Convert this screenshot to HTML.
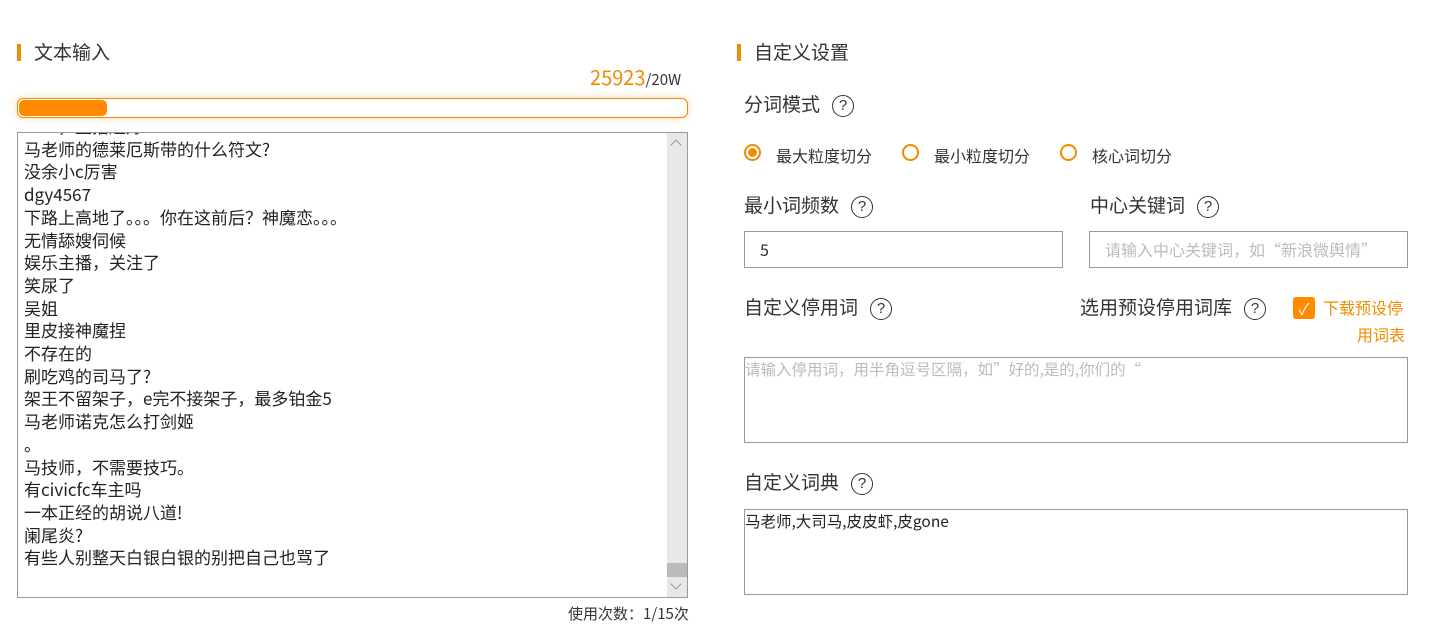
<!DOCTYPE html>
<html><head><meta charset="utf-8"><style>
*{margin:0;padding:0;box-sizing:border-box}
body{width:1430px;height:635px;background:#fff;font-family:"Noto Sans CJK SC","Liberation Sans",sans-serif;color:#333;position:relative;overflow:hidden}
.a{position:absolute;white-space:nowrap}
.bar{position:absolute;width:4px;height:17px;background:#f08c00}
.h{font-size:19px;color:#333;line-height:26px}
.q{display:inline-block;width:22px;height:22px;border:1.5px solid #333;border-radius:50%;font-size:15px;line-height:19px;text-align:center;vertical-align:middle;margin-left:12px;font-family:"Liberation Sans",sans-serif}
.lab{font-size:19px;color:#333;line-height:26px}
.inp{position:absolute;border:1px solid #999;background:#fff}
.radio{position:absolute;width:17px;height:17px;border:2px solid #f08c00;border-radius:50%}
.rl{font-size:16px;color:#333;line-height:20px}
.ta{position:absolute;left:17px;top:132px;width:671px;height:466px;border:1px solid #999;overflow:hidden}
.ta .lines{position:absolute;left:6px;top:-18px;font-size:17px;line-height:22.7px;color:#222}
.sb{position:absolute;right:0;top:0;width:20px;height:100%;background:#e8e8e8}
</style></head><body>
<div class="bar" style="left:17px;top:44px"></div>
<div class="a h" style="left:34px;top:39px">文本输入</div>
<div class="a" style="left:590px;top:64px;font-size:20px;line-height:26px;color:#f08c00">25923<span style="font-size:15px;color:#333">/20W</span></div>
<div class="a" style="left:17px;top:98px;width:671px;height:20px;border:1px solid #f08c00;border-radius:6px;box-shadow:0 0 8px rgba(240,140,0,.35)"></div>
<div class="a" style="left:19px;top:100px;width:88px;height:16px;background:#ff8a00;border-radius:5px"></div>
<div class="ta">
<div class="lines">一一，直播超好<br>马老师的德莱厄斯带的什么符文?<br>没余小c厉害<br>dgy4567<br>下路上高地了。。。你在这前后？神魔恋。。。<br>无情舔嫂伺候<br>娱乐主播，关注了<br>笑尿了<br>吴姐<br>里皮接神魔捏<br>不存在的<br>刷吃鸡的司马了?<br>架王不留架子，e完不接架子，最多铂金5<br>马老师诺克怎么打剑姬<br>。<br>马技师，不需要技巧。<br>有civicfc车主吗<br>一本正经的胡说八道!<br>阑尾炎?<br>有些人别整天白银白银的别把自己也骂了</div>
<div class="sb"><div style="position:absolute;top:8px;left:5px;width:8px;height:8px;border-left:1px solid #999;border-top:1px solid #999;transform:rotate(45deg)"></div>
<div style="position:absolute;top:430px;left:0;width:20px;height:14px;background:#bbb"></div>
<div style="position:absolute;top:447px;left:5px;width:8px;height:8px;border-right:1px solid #999;border-bottom:1px solid #999;transform:rotate(45deg)"></div></div>
</div>
<div class="a" style="left:568px;top:604px;font-size:15px;line-height:20px;color:#333">使用次数：1/15次</div>

<div class="bar" style="left:737px;top:44px"></div>
<div class="a h" style="left:754px;top:39px">自定义设置</div>
<div class="a lab" style="left:744px;top:91px">分词模式<span class="q">?</span></div>
<div class="radio" style="left:744px;top:144px;background:radial-gradient(circle,#f08c00 45%,#fff 50%)"></div>
<div class="a rl" style="left:776px;top:145px">最大粒度切分</div>
<div class="radio" style="left:902px;top:144px"></div>
<div class="a rl" style="left:934px;top:145px">最小粒度切分</div>
<div class="radio" style="left:1060px;top:144px"></div>
<div class="a rl" style="left:1092px;top:145px">核心词切分</div>
<div class="a lab" style="left:744px;top:192px">最小词频数<span class="q">?</span></div>
<div class="a lab" style="left:1090px;top:192px">中心关键词<span class="q">?</span></div>
<div class="inp" style="left:744px;top:231px;width:319px;height:37px"><span style="position:absolute;left:15px;top:6px;font-size:16px;line-height:22px">5</span></div>
<div class="inp" style="left:1089px;top:231px;width:319px;height:37px"><span style="position:absolute;left:15px;top:7px;font-size:16px;line-height:20px;color:#bbb;white-space:nowrap">请输入中心关键词，如“新浪微舆情”</span></div>
<div class="a lab" style="left:744px;top:294px">自定义停用词<span class="q">?</span></div>
<div class="a lab" style="left:1080px;top:294px">选用预设停用词库<span class="q">?</span></div>
<div class="a" style="left:1293px;top:297px;width:22px;height:22px;background:#ff8a00;border-radius:3px;color:#fff;font-size:16px;text-align:center;line-height:22px">✓</div>
<div class="a" style="left:1323px;top:296px;font-size:16px;line-height:22px;color:#f08c00">下载预设停</div>
<div class="a" style="left:1357px;top:323px;font-size:16px;line-height:22px;color:#f08c00">用词表</div>
<div class="inp" style="left:744px;top:357px;width:664px;height:86px"><span style="position:absolute;left:0;top:1px;font-size:15.5px;line-height:20px;color:#bbb;white-space:nowrap">请输入停用词，用半角逗号区隔，如”好的,是的,你们的“</span></div>
<div class="a lab" style="left:744px;top:469px">自定义词典<span class="q">?</span></div>
<div class="inp" style="left:744px;top:509px;width:664px;height:86px"><span style="position:absolute;left:0;top:1px;font-size:15.5px;line-height:20px;color:#222;white-space:nowrap">马老师,大司马,皮皮虾,皮gone</span></div>
</body></html>
